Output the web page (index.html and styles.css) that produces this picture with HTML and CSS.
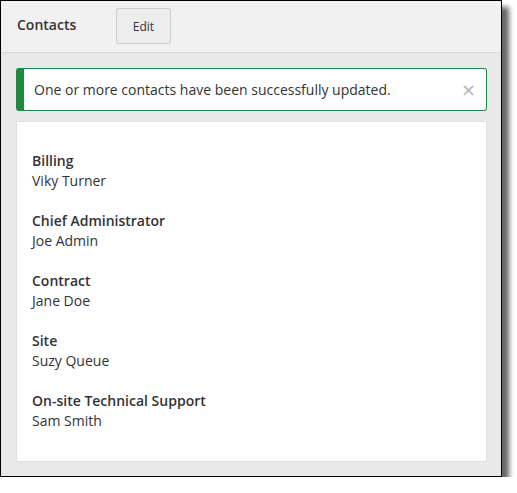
FILE: index.html
```html
<!DOCTYPE html>
<html>
<head>
<meta charset="utf-8">
<link rel="stylesheet" href="styles.css">
</head>
<body>
<div class="frame">
  <div class="header">
    <div class="title">Contacts</div>
    <button class="btn">Edit</button>
  </div>
  <div class="main">
    <div class="alert">
      <span class="alert-text">One or more contacts have been successfully updated.</span>
      <span class="close">&times;</span>
    </div>
    <div class="card">
      <div class="group"><div class="label">Billing</div><div class="value">Viky Turner</div></div>
      <div class="group"><div class="label">Chief Administrator</div><div class="value">Joe Admin</div></div>
      <div class="group"><div class="label">Contract</div><div class="value">Jane Doe</div></div>
      <div class="group"><div class="label">Site</div><div class="value">Suzy Queue</div></div>
      <div class="group"><div class="label">On-site Technical Support</div><div class="value">Sam Smith</div></div>
    </div>
  </div>
</div>
</body>
</html>
```
FILE: styles.css
```css
html, body {
  margin: 0;
  padding: 0;
  background: #ffffff;
}
body {
  font-family: "Open Sans", "Liberation Sans", sans-serif;
  color: #333;
}
.frame {
  width: 500px;
  height: 475px;
  border: 1px solid #000;
  background: #e9e9e9;
  box-shadow: 7px 7px 5px rgba(0, 0, 0, 0.6);
  display: flex;
  flex-direction: column;
}
.header {
  background: #f1f1f1;
  border-bottom: 1px solid #d6d6d6;
  display: flex;
  align-items: flex-start;
  padding: 7px 0 0 16px;
  box-sizing: border-box;
  height: 52px;
}
.title {
  width: 99px;
  font-size: 14px;
  font-weight: 600;
  line-height: 20px;
  color: #333;
  margin-top: 7px;
}
.btn {
  width: 55px;
  height: 36px;
  background: #ededed;
  border: 1px solid #cccccc;
  border-radius: 2px;
  font-family: "Open Sans", "Liberation Sans", sans-serif;
  font-size: 12px;
  color: #333;
  padding: 0;
}
.main {
  padding: 15px 14px 14px 15px;
  display: flex;
  flex-direction: column;
  gap: 10px;
  flex: 1;
}
.alert {
  height: 43px;
  box-sizing: border-box;
  background: #fff;
  border: 1px solid #1f8a3f;
  border-left: 8px solid #1f8a3f;
  border-radius: 3px;
  display: flex;
  align-items: center;
  justify-content: space-between;
  padding: 0 10px 0 10px;
  font-size: 14px;
  color: #333;
}
.close {
  color: #b5b5b5;
  font-size: 18px;
  line-height: 1;
  font-family: "DejaVu Sans", sans-serif;
  margin-top: 1px;
}
.card {
  background: #fff;
  border: 1px solid #e0e0e0;
  padding: 29px 15px 29px;
  flex: 1;
  display: flex;
  flex-direction: column;
  gap: 20px;
}
.label {
  font-size: 14px;
  font-weight: 600;
  line-height: 20px;
  color: #333;
}
.value {
  font-size: 14px;
  line-height: 20px;
  color: #333;
}
```
